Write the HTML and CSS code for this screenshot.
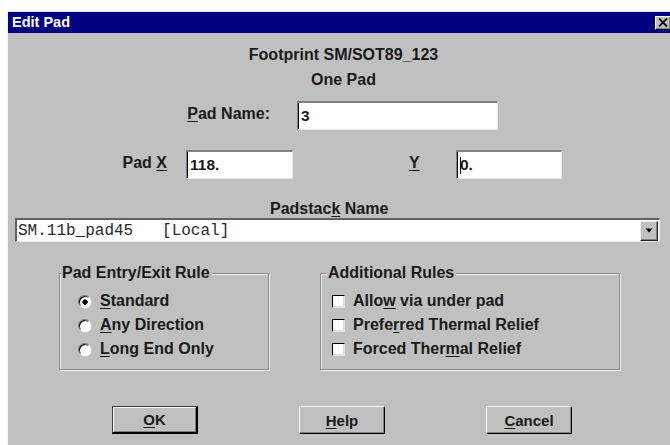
FILE: index.html
```html
<!DOCTYPE html>
<html>
<head>
<meta charset="utf-8">
<title>Edit Pad</title>
<link rel="stylesheet" href="styles.css">
</head>
<body>
<div class="dialog">
  <div class="titlebar">
    <span class="title">Edit Pad</span>
    <span class="close-btn">
      <svg width="10" height="9" viewBox="0 0 10 9"><path d="M1 0.5 L9 8.5 M9 0.5 L1 8.5" stroke="#000" stroke-width="1.8" fill="none"/></svg>
    </span>
  </div>
  <div class="content">
    <div class="caption">
      <div>Footprint SM/SOT89_123</div>
      <div>One Pad</div>
    </div>

    <div class="row row-name">
      <span class="lbl lbl-name"><u>P</u>ad Name:</span>
      <div class="field field-name">3</div>
    </div>

    <div class="row row-xy">
      <span class="lbl lbl-x">Pad <u>X</u></span>
      <div class="field field-x">118.</div>
      <span class="lbl lbl-y"><u>Y</u></span>
      <div class="field field-y"><span class="caret"></span>0.</div>
    </div>

    <div class="padstack-label">Padstac<u>k</u> Name</div>
    <div class="combo">
      <span class="combo-text">SM.11b_pad45   [Local]</span>
      <span class="combo-btn">
        <svg width="8" height="5" viewBox="0 0 8 5"><path d="M0.5 0.5 H7.5 L4 4.5 Z" fill="#000"/></svg>
      </span>
    </div>

    <div class="groups">
      <div class="group group-entry">
        <span class="group-title">Pad Entry/Exit Rule</span>
        <div class="options">
          <div class="opt"><span class="radio checked"></span><span><u>S</u>tandard</span></div>
          <div class="opt"><span class="radio"></span><span><u>A</u>ny Direction</span></div>
          <div class="opt"><span class="radio"></span><span><u>L</u>ong End Only</span></div>
        </div>
      </div>
      <div class="group group-rules">
        <span class="group-title">Additional Rules</span>
        <div class="options">
          <div class="opt"><span class="check"></span><span>Allo<u>w</u> via under pad</span></div>
          <div class="opt"><span class="check"></span><span>Prefe<u>r</u>red Thermal Relief</span></div>
          <div class="opt"><span class="check"></span><span>Forced Ther<u>m</u>al Relief</span></div>
        </div>
      </div>
    </div>

    <div class="buttons">
      <div class="btn btn-default"><u>O</u>K</div>
      <div class="btn"><u>H</u>elp</div>
      <div class="btn"><u>C</u>ancel</div>
    </div>
  </div>
</div>
</body>
</html>
```

FILE: styles.css
```css
html, body {
  margin: 0;
  height: 445px;
  overflow: hidden;
  background: #ffffff;
}

body {
  font-family: "Liberation Sans", Arial, sans-serif;
  font-weight: bold;
  font-size: 16px;
  color: #1a1a1a;
}

u {
  text-decoration: underline;
  text-underline-offset: 2px;
  text-decoration-thickness: 1px;
}

/* window frame */
.dialog {
  margin: 11px 0 0 7px;
  width: 672px;
  height: 440px;
  box-sizing: border-box;
  background: #c0c0c0;
  border-top: 1px solid #dcdcdc;
  border-left: 1px solid #f4f4f4;
}

.titlebar {
  height: 21px;
  background: #000080;
  display: flex;
  align-items: center;
  justify-content: space-between;
  padding-left: 4px;
}

.title {
  color: #fff;
  font-size: 14.5px;
  line-height: 21px;
}

.close-btn {
  width: 16px;
  height: 14px;
  margin-right: 8px;
  box-sizing: border-box;
  background: #c0c0c0;
  border: 1px solid;
  border-color: #fff #000 #000 #fff;
  box-shadow: inset -1px -1px #808080;
  display: flex;
  align-items: center;
  justify-content: center;
}

/* dialog body */
.content {
  padding-top: 9px;
}

.caption {
  text-align: center;
  line-height: 25px;
}

.row {
  display: flex;
  align-items: center;
}

.row-name {
  margin-top: 9px;
}

.row-xy {
  margin-top: 20px;
}

.lbl {
  line-height: 20px;
}

.lbl-name {
  width: 262px;
  text-align: right;
  margin-top: -3px;
}

.lbl-x {
  width: 159px;
  text-align: right;
  margin-top: -4px;
}

.lbl-y {
  width: 16px;
  margin-left: 116px;
  margin-top: -4px;
}

/* sunken edit boxes */
.field {
  height: 29px;
  box-sizing: border-box;
  background: #fff;
  border-style: solid;
  border-width: 2px 1px 1px 1px;
  border-color: #808080 #e8e8e8 #e8e8e8 #808080;
  box-shadow: inset 1px 0 #000;
  padding-left: 3px;
  display: flex;
  align-items: center;
  font-size: 15.5px;
}

.field-name {
  width: 201px;
  margin-left: 27px;
}

.field-x {
  width: 107px;
  margin-left: 19px;
}

.field-y {
  width: 106px;
  margin-left: 31px;
}

.caret {
  width: 1px;
  height: 17px;
  background: #000;
  margin-right: -1px;
}

.padstack-label {
  margin-top: 21px;
  margin-left: 262px;
  line-height: 18px;
}

/* drop-down list */
.combo {
  margin-left: 7px;
  width: 645px;
  height: 24px;
  box-sizing: border-box;
  background: #fff;
  border-style: solid;
  border-width: 2px 1px 1px 2px;
  border-color: #606060 #e8e8e8 #e8e8e8 #606060;
  display: flex;
  align-items: center;
  justify-content: space-between;
}

.combo-text {
  font-family: "Liberation Mono", "Courier New", monospace;
  font-weight: normal;
  font-size: 16px;
  color: #2a2a2a;
  white-space: pre;
  padding-left: 1px;
}

.combo-btn {
  width: 18px;
  height: 20px;
  margin-right: 1px;
  box-sizing: border-box;
  background: #c0c0c0;
  border: 1px solid;
  border-color: #eee #202020 #202020 #eee;
  box-shadow: inset -1px -1px #808080;
  display: flex;
  align-items: center;
  justify-content: center;
}

/* group boxes */
.groups {
  display: flex;
  margin-top: 31px;
  margin-left: 51px;
  gap: 51px;
}

.group {
  box-sizing: border-box;
  border: 1px solid #8a8a8a;
  box-shadow: inset 1px 1px #f0f0f0, 1px 1px #f0f0f0;
  padding-bottom: 8px;
}

.group-entry {
  width: 210px;
}

.group-rules {
  width: 300px;
}

.group-title {
  display: block;
  width: fit-content;
  margin-top: -10px;
  line-height: 18px;
  background: #c0c0c0;
  padding: 0 2px 0 1px;
}

.group-entry .group-title {
  margin-left: 1px;
}

.group-rules .group-title {
  margin-left: 6px;
}

.options {
  margin-top: 7px;
}

.opt {
  height: 24px;
  display: flex;
  align-items: center;
}

.group-entry .opt {
  padding-left: 18px;
}

.group-rules .opt {
  padding-left: 11px;
}

/* round option buttons with a sunken rim */
.radio {
  width: 13px;
  height: 13px;
  box-sizing: border-box;
  border-radius: 50%;
  background: #fff;
  border: 1px solid;
  border-color: #707070 #ffffff #ffffff #707070;
  box-shadow: inset 1px 1px #000, 1px 1px 0 -0.5px #e8e8e8;
  margin-right: 9px;
}

.radio.checked {
  background: radial-gradient(circle at 55% 55%, #000 0 2.4px, #fff 2.9px);
}

.check {
  width: 13px;
  height: 13px;
  box-sizing: border-box;
  background: #fff;
  border: 1px solid;
  border-color: #000 #e6e6e6 #e6e6e6 #000;
  box-shadow: inset -1px -1px #dcdcdc;
  margin-right: 8px;
}

/* push buttons */
.buttons {
  display: flex;
  margin-top: 36px;
  margin-left: 104px;
  gap: 101px;
}

.btn {
  width: 86px;
  height: 28px;
  box-sizing: border-box;
  border: 1px solid;
  border-color: #fafafa #000 #000 #fafafa;
  box-shadow: inset -1px -1px #808080;
  display: flex;
  align-items: center;
  justify-content: center;
  font-size: 15px;
}

.btn-default {
  border-color: #404040 #000 #000 #404040;
  border-width: 1px 2px 2px 1px;
  box-shadow: inset 1px 1px #fafafa, inset -1px -1px #808080;
}
```
